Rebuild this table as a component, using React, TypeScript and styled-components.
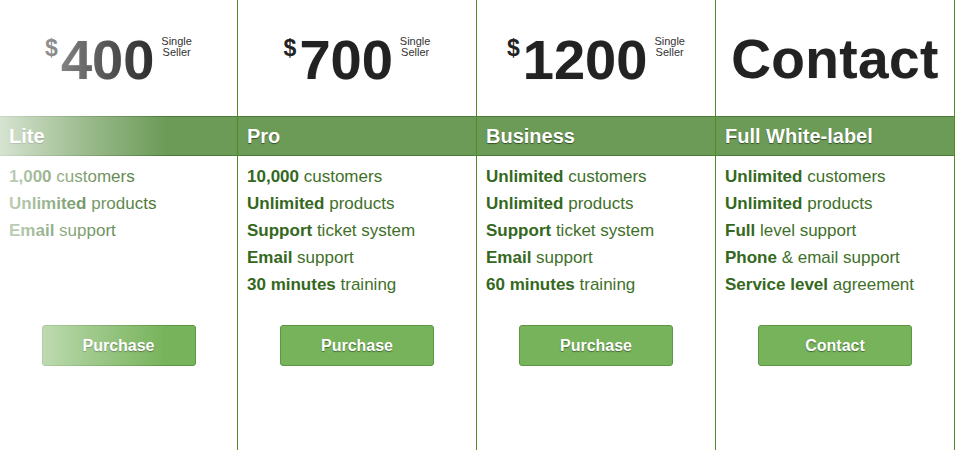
import React from "react";
import styled, { createGlobalStyle } from "styled-components";

const Global = createGlobalStyle`
  html, body { margin: 0; padding: 0; background: #fff; }
  body { font-family: "Liberation Sans", Arial, sans-serif; }
`;

const Table = styled.div`
  display: grid;
  grid-template-columns: 238px 239px 239px 239px;
  height: 450px;
  width: 957px;
  overflow: hidden;
`;

const Column = styled.div`
  position: relative;
  display: flex;
  flex-direction: column;
  border-right: 1px solid #4f8b2b;
`;

const Fade = styled.div`
  position: absolute;
  inset: 0;
  pointer-events: none;
  background: linear-gradient(
    to right,
    rgba(255, 255, 255, 0.72) 0%,
    rgba(255, 255, 255, 0.32) 36%,
    rgba(255, 255, 255, 0) 70%
  );
`;

const PriceArea = styled.div`
  height: 116px;
  box-sizing: border-box;
  padding-top: 32px;
  display: flex;
  justify-content: center;
  align-items: flex-start;
  color: #222;
`;

const Currency = styled.span`
  font-size: 23px;
  line-height: 23px;
  font-weight: bold;
  margin-top: 5px;
  margin-right: 3px;
`;

const Amount = styled.span<{ $word?: boolean }>`
  font-size: ${(p) => (p.$word ? "55px" : "56px")};
  line-height: 55px;
  font-weight: bold;
  letter-spacing: ${(p) => (p.$word ? "0.4px" : "0")};
  text-shadow: 0 0 1px rgba(0, 0, 0, 0.3);
`;

const Note = styled.span`
  font-size: 11px;
  line-height: 11px;
  text-align: center;
  color: #333;
  margin-top: 4px;
  margin-left: 7px;
`;

const Header = styled.div`
  height: 38px;
  border-top: 1px solid #4c7c38;
  border-bottom: 1px solid #4c7c38;
  background: #6c9b58;
  display: flex;
  align-items: center;
  padding: 0 9px;
  color: #fff;
  font-size: 20px;
  font-weight: bold;
  text-shadow: 0 1px 1px rgba(30, 50, 20, 0.7);
`;

const Features = styled.ul`
  list-style: none;
  margin: 0;
  padding: 7px 9px 0;
  min-height: 135px;
  font-size: 17px;
  line-height: 27px;
  color: #3f702a;
`;

const Strong = styled.b`
  color: #346820;
`;

const ButtonRow = styled.div`
  display: flex;
  justify-content: center;
  margin-top: 27px;
`;

const Button = styled.button`
  width: 154px;
  height: 41px;
  box-sizing: border-box;
  border: 1px solid #5c9844;
  border-radius: 3px;
  background: #77b35b;
  color: #fff;
  font-family: "Liberation Sans", Arial, sans-serif;
  font-size: 16px;
  font-weight: bold;
  text-shadow: 0 1px 1px rgba(30, 60, 20, 0.6);
  cursor: pointer;
  padding: 0;
`;

type Plan = {
  price?: string;
  contact?: boolean;
  name: string;
  features: [string, string][];
  action: string;
  faded?: boolean;
};

const plans: Plan[] = [
  {
    price: "400",
    name: "Lite",
    features: [
      ["1,000", " customers"],
      ["Unlimited", " products"],
      ["Email", " support"],
    ],
    action: "Purchase",
    faded: true,
  },
  {
    price: "700",
    name: "Pro",
    features: [
      ["10,000", " customers"],
      ["Unlimited", " products"],
      ["Support", " ticket system"],
      ["Email", " support"],
      ["30 minutes", " training"],
    ],
    action: "Purchase",
  },
  {
    price: "1200",
    name: "Business",
    features: [
      ["Unlimited", " customers"],
      ["Unlimited", " products"],
      ["Support", " ticket system"],
      ["Email", " support"],
      ["60 minutes", " training"],
    ],
    action: "Purchase",
  },
  {
    contact: true,
    name: "Full White-label",
    features: [
      ["Unlimited", " customers"],
      ["Unlimited", " products"],
      ["Full", " level support"],
      ["Phone", " & email support"],
      ["Service level", " agreement"],
    ],
    action: "Contact",
  },
];

export default function App() {
  return (
    <>
      <Global />
      <Table>
        {plans.map((p) => (
          <Column key={p.name}>
            <PriceArea>
              {p.contact ? (
                <Amount $word>Contact</Amount>
              ) : (
                <>
                  <Currency>$</Currency>
                  <Amount>{p.price}</Amount>
                  <Note>
                    Single
                    <br />
                    Seller
                  </Note>
                </>
              )}
            </PriceArea>
            <Header>{p.name}</Header>
            <Features>
              {p.features.map(([b, r]) => (
                <li key={b + r}>
                  <Strong>{b}</Strong>
                  {r}
                </li>
              ))}
            </Features>
            <ButtonRow>
              <Button>{p.action}</Button>
            </ButtonRow>
            {p.faded && <Fade />}
          </Column>
        ))}
      </Table>
    </>
  );
}
